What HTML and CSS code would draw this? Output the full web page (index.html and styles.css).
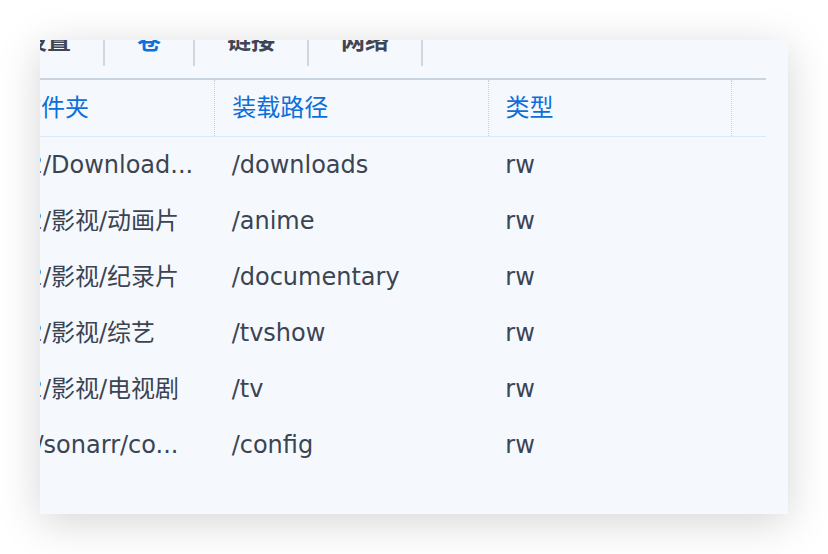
FILE: index.html
```html
<!DOCTYPE html>
<html lang="zh-CN">
<head>
<meta charset="utf-8">
<title>卷</title>
<link rel="stylesheet" href="styles.css">
</head>
<body>
<div class="stage">
  <div class="panel">
    <div class="content">
      <nav class="tabs">
        <div class="tab">高级设置</div>
        <div class="tab active">卷</div>
        <div class="tab">链接</div>
        <div class="tab">网络</div>
      </nav>
      <div class="table">
        <div class="row head">
          <div class="cell c1 h1">文件/文件夹</div>
          <div class="cell c2">装载路径</div>
          <div class="cell c3">类型</div>
          <div class="cell c4"></div>
        </div>
        <div class="row">
          <div class="cell c1">/video2/Download...</div>
          <div class="cell c2">/downloads</div>
          <div class="cell c3">rw</div>
          <div class="cell c4"></div>
        </div>
        <div class="row">
          <div class="cell c1">/video2/影视/动画片</div>
          <div class="cell c2">/anime</div>
          <div class="cell c3">rw</div>
          <div class="cell c4"></div>
        </div>
        <div class="row">
          <div class="cell c1">/video2/影视/纪录片</div>
          <div class="cell c2">/documentary</div>
          <div class="cell c3">rw</div>
          <div class="cell c4"></div>
        </div>
        <div class="row">
          <div class="cell c1">/video2/影视/综艺</div>
          <div class="cell c2">/tvshow</div>
          <div class="cell c3">rw</div>
          <div class="cell c4"></div>
        </div>
        <div class="row">
          <div class="cell c1">/video2/影视/电视剧</div>
          <div class="cell c2">/tv</div>
          <div class="cell c3">rw</div>
          <div class="cell c4"></div>
        </div>
        <div class="row">
          <div class="cell c1">/config/sonarr/co...</div>
          <div class="cell c2">/config</div>
          <div class="cell c3">rw</div>
          <div class="cell c4"></div>
        </div>
      </div>
    </div>
  </div>
</div>
</body>
</html>
```
FILE: styles.css
```css
html, body {
  margin: 0;
  padding: 0;
  background: #ffffff;
}

body {
  font-family: "DejaVu Sans", "Noto Sans CJK SC", sans-serif;
  font-size: 24px;
  color: #3b4452;
}

.stage {
  padding: 40px;
  height: 554px;
  box-sizing: border-box;
}

.panel {
  width: 748px;
  height: 474px;
  background: #f5f9fe;
  overflow: hidden;
  box-shadow: 0 8px 40px rgba(0, 0, 0, 0.17);
}

.content {
  margin-top: -20px;
  margin-left: -107px;
  width: 833px;
}

.tabs {
  display: flex;
  height: 46px;
  margin-left: 10px;
  margin-bottom: 12px;
}

.tab {
  padding: 7px 32px 11px;
  line-height: 28px;
  font-weight: bold;
  color: #3e4654;
  border-right: 2px solid #cfd7e1;
  white-space: nowrap;
}

.tab.active {
  color: #0f6fdc;
}

.table {
  display: flex;
  flex-direction: column;
}

.row {
  display: flex;
  height: 56px;
}

.row.head {
  border-top: 2px solid #cad4df;
  border-bottom: 1px solid #dbe7f3;
  color: #0d6fd9;
}

.cell {
  box-sizing: border-box;
  padding: 0 17px;
  line-height: 57px;
  white-space: nowrap;
  overflow: hidden;
}

.c1 { width: 282px; padding-left: 21px; }
.c2 { width: 274px; }
.c3 { width: 244px; }
.c4 { width: 33px; }

.head .cell { line-height: 56px; }

.head .h1 { padding-left: 28px; }

.head .c2,
.head .c3,
.head .c4 {
  border-left: 1px dotted #bfd2e6;
}
```
